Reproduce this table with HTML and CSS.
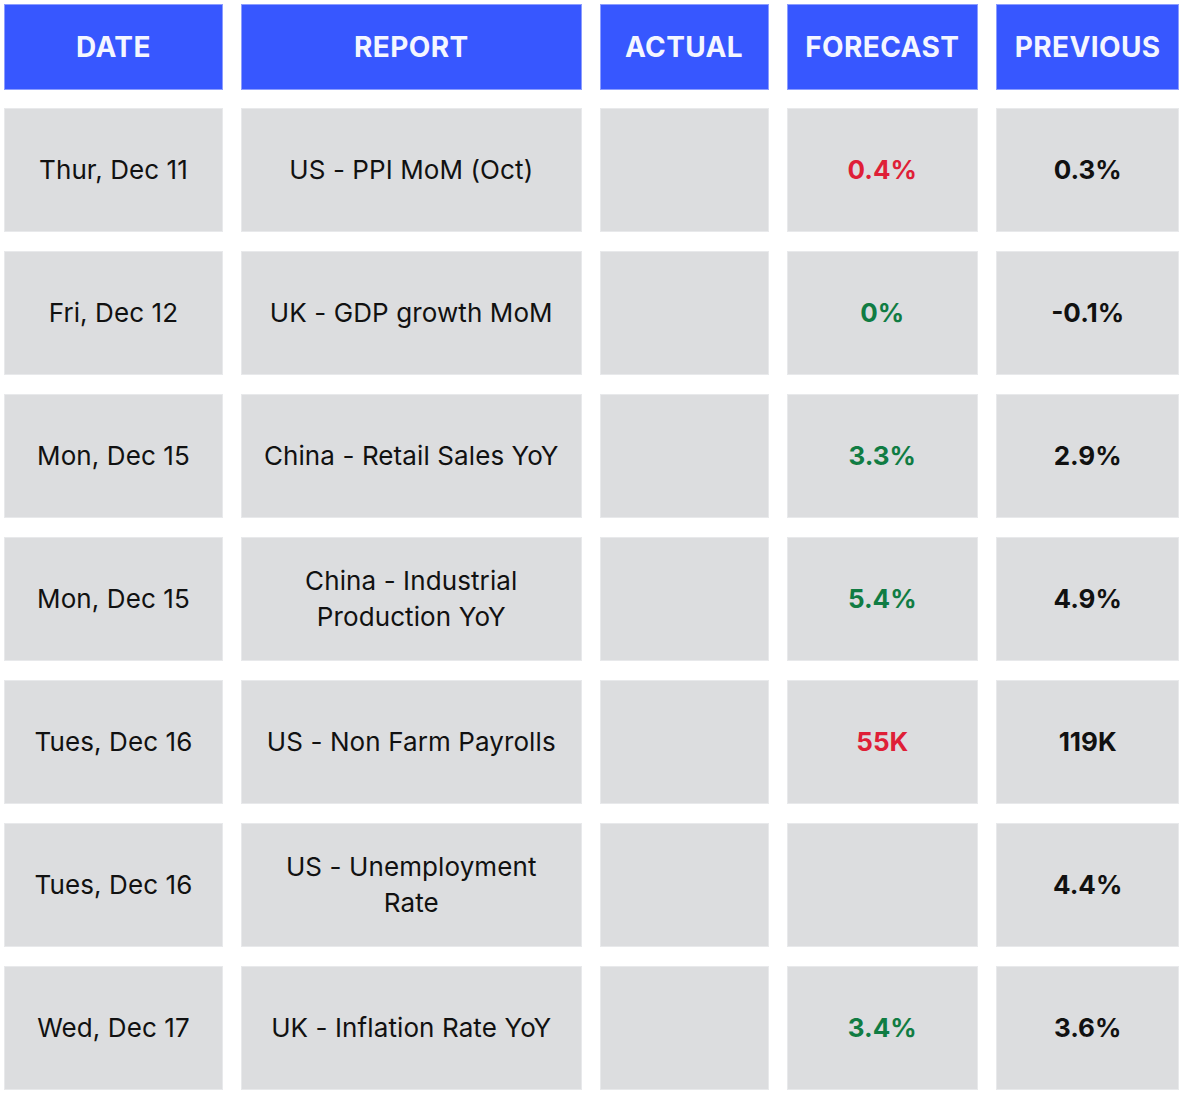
FILE: index.html
```html
<!DOCTYPE html>
<html>
<head>
<meta charset="utf-8">
<link rel="stylesheet" href="styles.css">
</head>
<body>
<div class="table">
  <div class="th">DATE</div>
  <div class="th">REPORT</div>
  <div class="th">ACTUAL</div>
  <div class="th">FORECAST</div>
  <div class="th">PREVIOUS</div>

  <div class="td">Thur, Dec 11</div>
  <div class="td">US - PPI MoM (Oct)</div>
  <div class="td"></div>
  <div class="td val red">0.4%</div>
  <div class="td val">0.3%</div>

  <div class="td">Fri, Dec 12</div>
  <div class="td">UK - GDP growth MoM</div>
  <div class="td"></div>
  <div class="td val green">0%</div>
  <div class="td val">-0.1%</div>

  <div class="td">Mon, Dec 15</div>
  <div class="td">China - Retail Sales YoY</div>
  <div class="td"></div>
  <div class="td val green">3.3%</div>
  <div class="td val">2.9%</div>

  <div class="td">Mon, Dec 15</div>
  <div class="td">China - Industrial<br>Production YoY</div>
  <div class="td"></div>
  <div class="td val green">5.4%</div>
  <div class="td val">4.9%</div>

  <div class="td">Tues, Dec 16</div>
  <div class="td">US - Non Farm Payrolls</div>
  <div class="td"></div>
  <div class="td val red">55K</div>
  <div class="td val">119K</div>

  <div class="td">Tues, Dec 16</div>
  <div class="td">US - Unemployment<br>Rate</div>
  <div class="td"></div>
  <div class="td val"></div>
  <div class="td val">4.4%</div>

  <div class="td">Wed, Dec 17</div>
  <div class="td">UK - Inflation Rate YoY</div>
  <div class="td"></div>
  <div class="td val green">3.4%</div>
  <div class="td val">3.6%</div>
</div>
</body>
</html>
```

FILE: styles.css
```css
html, body {
  margin: 0;
  padding: 0;
  background: #ffffff;
}
body {
  font-family: Inter, "Noto Sans", sans-serif;
  color: #111111;
}
.table {
  display: grid;
  grid-template-columns: 219px 340.5px 169px 191.5px 183.3px;
  grid-template-rows: 85.5px repeat(7, 124.6px);
  column-gap: 18px;
  row-gap: 18.4px;
  padding: 4px;
}
.th, .td {
  box-sizing: border-box;
  display: flex;
  align-items: center;
  justify-content: center;
  text-align: center;
}
.th {
  background: #3757ff;
  border: 1px solid #8c9dff;
  color: #f4f6ff;
  font-weight: 700;
  font-size: 28px;
  letter-spacing: 0.4px;
}
.td {
  background: #dcdddf;
  border: 1px solid #e8e9eb;
  font-size: 26px;
  line-height: 36px;
  font-weight: 400;
  letter-spacing: 0.1px;
}
.val {
  font-weight: 700;
  letter-spacing: 0;
}
.red { color: #df1f37; }
.green { color: #107c43; }
```
